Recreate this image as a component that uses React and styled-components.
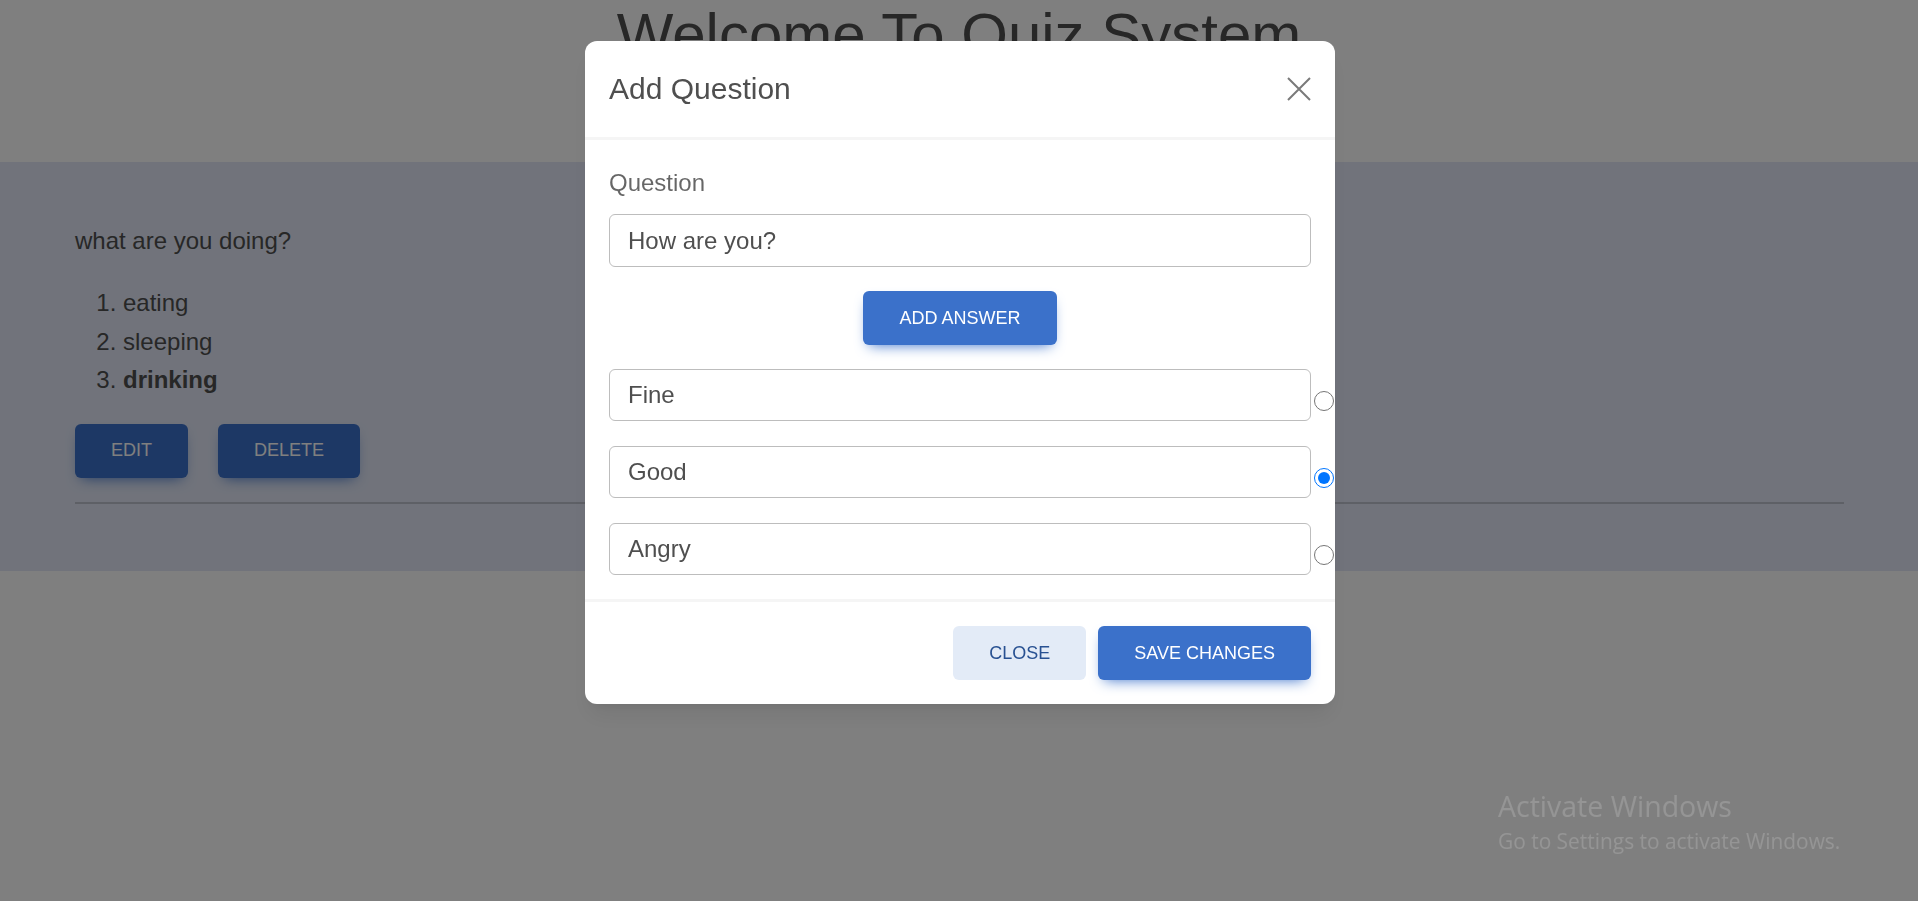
import React from 'react';
import styled, { createGlobalStyle, css } from 'styled-components';

const GlobalStyle = createGlobalStyle`
  html, body {
    margin: 0;
    padding: 0;
  }

  body {
    font-family: "Liberation Sans", Arial, sans-serif;
    background: #fff;
    color: #4f4f4f;
  }

  *, *::before, *::after {
    box-sizing: border-box;
  }
`;

const Page = styled.div`
  min-height: 100vh;
`;

const Header = styled.header`
  height: 162px;
  text-align: center;
`;

const PageTitle = styled.h1`
  margin: 0;
  font-size: 60px;
  font-weight: 400;
  line-height: 69px;
  color: #4f4f4f;
`;

const QuizSection = styled.section`
  background: #e2e7f6;
  padding: 60px 74px 67px 75px;
`;

const QuestionText = styled.p`
  margin: 0 0 24px;
  font-size: 24px;
  line-height: 38.4px;
`;

const AnswerList = styled.ol`
  margin: 0 0 24px;
  padding-left: 48px;
  font-size: 24px;
  line-height: 38.4px;
`;

const CorrectAnswer = styled.strong`
  font-weight: 700;
`;

const ActionRow = styled.div`
  display: flex;
  gap: 30px;
`;

const Button = styled.button`
  height: 54px;
  padding: 0 36px;
  border: none;
  border-radius: 6px;
  font-family: inherit;
  font-size: 18px;
  text-transform: uppercase;
  cursor: pointer;

  ${({ $variant }) =>
    $variant === 'secondary'
      ? css`
          background: #e3ebf7;
          color: #285192;
        `
      : css`
          background: #3b71ca;
          color: #fff;
          box-shadow: 0 6px 14px -6px #3b71ca;
        `}
`;

const Divider = styled.hr`
  margin: 24px 0 0;
  border: 0;
  border-top: 2px solid rgba(79, 79, 79, 0.25);
`;

const Backdrop = styled.div`
  position: fixed;
  inset: 0;
  background: rgba(0, 0, 0, 0.5);
  display: flex;
  justify-content: center;
  align-items: flex-start;
  padding: 41px 0 0 2px;
`;

const Dialog = styled.div`
  width: 750px;
  background: #fff;
  border-radius: 12px;
  box-shadow: 0 15px 22px -4px rgba(0, 0, 0, 0.07), 0 6px 9px -3px rgba(0, 0, 0, 0.05);
`;

const DialogHeader = styled.div`
  display: flex;
  align-items: center;
  justify-content: space-between;
  padding: 24px;
  border-bottom: 3px solid #f5f5f5;
`;

const DialogTitle = styled.h5`
  margin: 0;
  font-size: 30px;
  font-weight: 400;
  line-height: 48px;
  color: #4f4f4f;
`;

const CloseButton = styled.button`
  display: flex;
  width: 24px;
  height: 24px;
  padding: 0;
  border: none;
  background: transparent;
  cursor: pointer;
`;

const DialogBody = styled.div`
  padding: 24px;
`;

const FieldLabel = styled.label`
  display: block;
  margin-bottom: 12px;
  font-size: 24px;
  line-height: 38.4px;
  color: rgba(0, 0, 0, 0.6);
`;

const TextInput = styled.input`
  display: block;
  width: 100%;
  height: 53px;
  padding: 0 18px;
  border: 1px solid #bdbdbd;
  border-radius: 6px;
  font-family: inherit;
  font-size: 24px;
  color: #4f4f4f;
  background: #fff;
  outline: none;
`;

const AnswerInput = styled(TextInput)`
  height: 52px;
  flex: 0 0 100%;
`;

const AddAnswerWrap = styled.div`
  display: flex;
  justify-content: center;
  margin: 24px 0;
`;

const AnswerRow = styled.div`
  display: flex;
  align-items: center;

  & + & {
    margin-top: 25px;
  }
`;

const Radio = styled.input`
  flex-shrink: 0;
  width: 20px;
  height: 20px;
  margin: 12px 0 0 3px;
  accent-color: #0075ff;
`;

const DialogFooter = styled.div`
  display: flex;
  justify-content: flex-end;
  gap: 12px;
  padding: 24px;
  border-top: 3px solid #f5f5f5;
`;

const Watermark = styled.div`
  position: fixed;
  left: 1498px;
  top: 788px;
  font-family: "Open Sans", "Noto Sans", sans-serif;
  color: rgba(255, 255, 255, 0.17);
  pointer-events: none;
`;

Watermark.Title = styled.div`
  font-size: 28.5px;
  line-height: 37px;
`;

Watermark.Note = styled.div`
  margin-top: 3px;
  font-size: 20.9px;
  line-height: 27px;
`;

const answers = [
  { text: 'Fine', checked: false },
  { text: 'Good', checked: true },
  { text: 'Angry', checked: false },
];

const CloseIcon = () => (
  <svg width="24" height="24" viewBox="0 0 24 24">
    <path d="M1 1 L23 23 M23 1 L1 23" stroke="#7a7a7a" strokeWidth="2" fill="none" />
  </svg>
);

export default function App() {
  return (
    <>
      <GlobalStyle />
      <Page>
        <Header>
          <PageTitle>Welcome To Quiz System</PageTitle>
        </Header>
        <QuizSection>
          <QuestionText>what are you doing?</QuestionText>
          <AnswerList>
            <li>eating</li>
            <li>sleeping</li>
            <li>
              <CorrectAnswer>drinking</CorrectAnswer>
            </li>
          </AnswerList>
          <ActionRow>
            <Button>Edit</Button>
            <Button>Delete</Button>
          </ActionRow>
          <Divider />
        </QuizSection>
      </Page>

      <Backdrop>
        <Dialog>
          <DialogHeader>
            <DialogTitle>Add Question</DialogTitle>
            <CloseButton aria-label="Close">
              <CloseIcon />
            </CloseButton>
          </DialogHeader>
          <DialogBody>
            <FieldLabel htmlFor="question">Question</FieldLabel>
            <TextInput id="question" defaultValue="How are you?" />
            <AddAnswerWrap>
              <Button>Add Answer</Button>
            </AddAnswerWrap>
            {answers.map((a) => (
              <AnswerRow key={a.text}>
                <AnswerInput defaultValue={a.text} />
                <Radio type="radio" name="correct" defaultChecked={a.checked} />
              </AnswerRow>
            ))}
          </DialogBody>
          <DialogFooter>
            <Button $variant="secondary">Close</Button>
            <Button>Save Changes</Button>
          </DialogFooter>
        </Dialog>
      </Backdrop>

      <Watermark>
        <Watermark.Title>Activate Windows</Watermark.Title>
        <Watermark.Note>Go to Settings to activate Windows.</Watermark.Note>
      </Watermark>
    </>
  );
}
